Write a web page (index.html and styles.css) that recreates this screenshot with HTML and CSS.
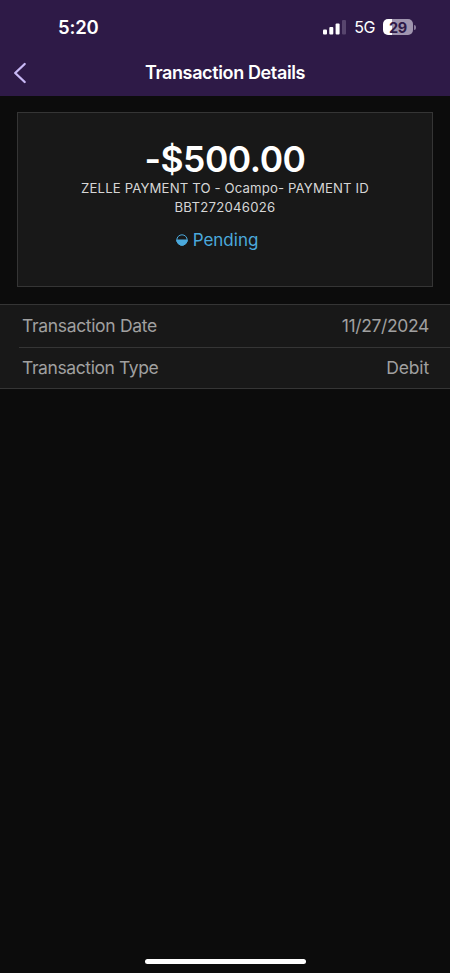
FILE: index.html
```html
<!DOCTYPE html>
<html lang="en">
<head>
<meta charset="utf-8">
<title>Transaction Details</title>
<link rel="stylesheet" href="styles.css">
</head>
<body>
<header class="top">
  <div class="status">
    <span class="time">5:20</span>
    <div class="indicators">
      <svg class="signal" viewBox="0 0 24 15"><rect x="0" y="9.5" width="4" height="5" rx="1"/><rect x="6.3" y="7" width="4" height="7.5" rx="1"/><rect x="12.6" y="3.5" width="4" height="11" rx="1"/><rect class="dim" x="19" y="0" width="4" height="14.5" rx="1"/></svg>
      <span class="network">5G</span>
      <span class="battery"><span class="level">29</span></span><span class="cap"></span>
    </div>
  </div>
  <nav class="nav">
    <svg class="back" viewBox="0 0 14 22"><path d="M11.7 2 2.2 11l9.5 9"/></svg>
    <h1 class="title">Transaction Details</h1>
  </nav>
</header>
<main>
  <section class="card">
    <div class="amount">-$500.00</div>
    <p class="memo"><span class="line1">ZELLE PAYMENT TO - Ocampo- PAYMENT ID</span><br><span class="line2">BBT272046026</span></p>
    <div class="state"><svg class="half" viewBox="0 0 12 12"><circle cx="6" cy="6" r="5.2"/><path d="M.8 6h10.4a5.2 5.2 0 0 1-10.4 0z"/></svg><span class="pending">Pending</span></div>
  </section>
  <dl class="rows">
    <div class="row"><dt class="label-date">Transaction Date</dt><dd class="date">11/27/2024</dd></div>
    <div class="row"><dt class="label-type">Transaction Type</dt><dd class="type">Debit</dd></div>
  </dl>
</main>
<footer class="home"><span class="bar"></span></footer>
</body>
</html>
```
FILE: styles.css
```css
* { box-sizing: border-box; }
body { margin: 0; height: 973px; background: #0c0c0c; color: #fff; font-family: Inter, "Liberation Sans", sans-serif; display: flex; flex-direction: column; overflow: hidden; }
.top { height: 96px; background: #2e1a47; flex: none; }
.status { height: 54px; display: flex; justify-content: space-between; padding: 0 34px 0 58px; align-items: center; }
.time { font-size: 18.5px; font-weight: 600; letter-spacing: -0.2px; }
.indicators { display: flex; align-items: center; }
.signal { width: 24px; height: 15px; fill: #fff; }
.signal .dim { fill: #57456d; }
.network { font-size: 16px; letter-spacing: -0.5px; margin: 0 8px 0 7px; }
.battery { width: 30px; height: 16px; border-radius: 5px; background: linear-gradient(90deg, #fff 9px, #a095af 9px); display: flex; align-items: center; justify-content: center; }
.level { color: #2e1a47; font-size: 14.5px; font-weight: 700; letter-spacing: -0.2px; }
.cap { width: 2px; height: 5px; margin-left: 1px; background: #8a7b9b; border-radius: 0 2px 2px 0; }
.nav { height: 38px; display: grid; grid-template-columns: 40px 1fr 40px; align-items: center; }
.back { width: 14px; height: 22px; margin-left: 13px; fill: none; stroke: #c9b9f6; stroke-width: 2.3; stroke-linecap: round; stroke-linejoin: round; }
.title { margin: 0; padding-bottom: 1px; text-align: center; font-size: 18px; line-height: 22px; font-weight: 600; letter-spacing: -0.37px; }
.card { margin: 16px 17px 0; height: 175px; padding-top: 28px; border: 1px solid #353535; background: #181818; text-align: center; }
.amount { font-size: 35.5px; font-weight: 600; line-height: 37px; letter-spacing: -0.5px; }
.memo { margin: 0; padding-top: 1px; font-size: 13.2px; line-height: 19px; letter-spacing: 0.13px; color: #d6d6d6; }
.line2 { letter-spacing: 0.25px; }
.state { margin-top: 12px; padding-right: 16px; height: 22px; display: flex; align-items: center; justify-content: center; gap: 5px; color: #4ba9dc; font-size: 17px; }
.half { width: 12px; height: 12px; stroke: #4ba9dc; fill: none; }
.half path { fill: #4ba9dc; }
.rows { margin: 17px 0 0; height: 85px; background: #181818; border-top: 1px solid #353535; border-bottom: 1px solid #353535; }
.row { height: 42px; padding: 0 21px 1px 22px; display: flex; align-items: center; justify-content: space-between; color: #a0a0a0; font-size: 17.5px; letter-spacing: -0.33px; }
dd { margin: 0; }
.date { letter-spacing: -0.37px; }
.type { letter-spacing: -0.15px; }
.label-type { letter-spacing: -0.4px; }
.row + .row { margin-left: 19px; padding-left: 3px; padding-bottom: 2px; border-top: 1px solid #353535; }
.home { margin-top: auto; height: 14px; display: flex; justify-content: center; }
.bar { width: 161px; height: 5px; border-radius: 3px; background: #fff; }
```
